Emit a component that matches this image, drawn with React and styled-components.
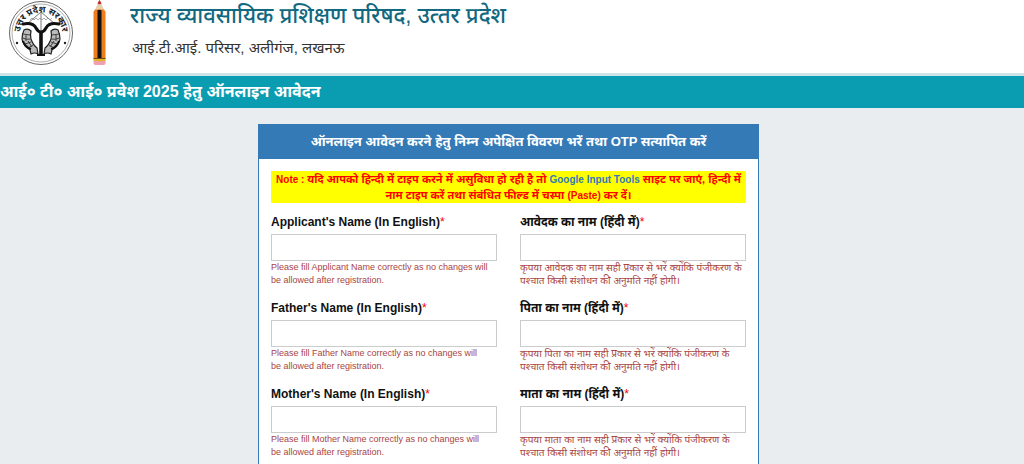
import React from 'react';
import styled, {createGlobalStyle} from 'styled-components';

const fields = [
    {
        id: 'applicant',
        en: "Applicant's Name (In English)",
        hi: 'आवेदक का नाम (हिंदी में)',
        enHelp: 'Please fill Applicant Name correctly as no changes will be\u00a0allowed after registration.',
        hiHelp: 'कृपया आवेदक का नाम सही प्रकार से भरें क्योंकि पंजीकरण के पश्चात किसी संशोधन की अनुमति नहीं होगी।',
    },
    {
        id: 'father',
        en: "Father's Name (In English)",
        hi: 'पिता का नाम (हिंदी में)',
        enHelp: 'Please fill Father Name correctly as no changes will be\u00a0allowed after registration.',
        hiHelp: 'कृपया पिता का नाम सही प्रकार से भरें क्योंकि पंजीकरण के पश्चात किसी संशोधन की अनुमति नहीं होगी।',
    },
    {
        id: 'mother',
        en: "Mother's Name (In English)",
        hi: 'माता का नाम (हिंदी में)',
        enHelp: 'Please fill Mother Name correctly as no changes will be\u00a0allowed after registration.',
        hiHelp: 'कृपया माता का नाम सही प्रकार से भरें क्योंकि पंजीकरण के पश्चात किसी संशोधन की अनुमति नहीं होगी।',
    },
];

const Emblem = () => (
    <EmblemSvg viewBox="0 0 66 66" role="img" aria-label="उत्तर प्रदेश सरकार">
        <defs>
            <path id="ring" d="M12.5 38 A21 21 0 1 1 53.5 38"/>
        </defs>
        <circle cx="33" cy="33" r="31.5" fill="#fff" stroke="#666" strokeWidth="1"/>
        <circle cx="33" cy="33" r="29" fill="none" stroke="#999" strokeWidth="0.8"/>
        <RingText>
            <textPath href="#ring" startOffset="50%" textAnchor="middle">उत्तर प्रदेश सरकार</textPath>
        </RingText>
        <path d="M33 12 L19 24 M33 12 L47 24 M33 12 V32" fill="none" stroke="#555" strokeWidth="0.8"/>
        <path d="M22 20 l2 -2 2 2 2 -2 2 2 2 -2 2 2 2 -2 2 2 2 -2 2 2 2 -2" fill="none" stroke="#888" strokeWidth="0.7"/>
        <path d="M15 24 q10 -2 13 4 q2 4 5 4 q3 0 5 -4 q3 -6 13 -4" fill="none" stroke="#111" strokeWidth="3" strokeLinecap="round"/>
        <path d="M33 31 V55" stroke="#111" strokeWidth="3.6"/>
        <path d="M29 55 h8" stroke="#111" strokeWidth="2"/>
        <g id="fish">
            <path d="M16 30 q4 -2 7 1 q-1 4 0 8 q2 6 6 9 l1 6 q-3 -2 -7 0 l-1 -4 q-7 -4 -8 -11 q0 -5 2 -9z" fill="#bbb" stroke="#222" strokeWidth="1.2"/>
            <path d="M15 34 l7 1 M14.5 38 q4 2 8 1 M17 44 l6 -2 M20 48 l5 -3 M18 35 v6 M20 41 l4 6" fill="none" stroke="#333" strokeWidth="0.9"/>
            <path d="M15 41 q2 6 8 8" fill="none" stroke="#111" strokeWidth="2"/>
        </g>
        <use href="#fish" transform="translate(66 0) scale(-1 1)"/>
        <circle cx="9" cy="43" r="1.2" fill="#222"/>
        <circle cx="57" cy="43" r="1.2" fill="#222"/>
    </EmblemSvg>
);

const Pencil = () => (
    <PencilSvg viewBox="0 0 13 65" aria-hidden="true">
        <path d="M6.5 0 L0.5 13 H12.5 Z" fill="#e3cfae"/>
        <path d="M6.5 0 L4.4 3.5 Q6.5 5 8.6 3.5 Z" fill="#c3292b"/>
        <path d="M0.5 12 Q2 8 4.5 10 Q6.5 8 8.5 10 Q11 8 12.5 12 V59 H0.5 Z" fill="#ef7d1c"/>
        <rect x="4.5" y="10" width="4" height="48" fill="#111"/>
        <rect x="0.5" y="58" width="12" height="1" fill="#6b4a12"/>
        <rect x="0.5" y="59" width="12" height="2" fill="#e6b422"/>
        <path d="M0.5 61 H12.5 V63 Q12.5 65 10.5 65 H2.5 Q0.5 65 0.5 63 Z" fill="#ef9fae"/>
    </PencilSvg>
);

const Field = ({id, label, help, small}) => (
    <FieldBlock>
        <Label htmlFor={id}>{label}<Star>*</Star></Label>
        <Input id={id} type="text" aria-describedby={`${id}-help`}/>
        <Help id={`${id}-help`} $small={small}>{help}</Help>
    </FieldBlock>
);

const App = () => {
    return (
        <>
            <GlobalStyle/>
            <Header>
                <Emblem/>
                <Pencil/>
                <HeaderText>
                    <Title>राज्य व्यावसायिक प्रशिक्षण परिषद, उत्‍तर प्रदेश</Title>
                    <Address>आई.टी.आई. परिसर, अलीगंज, लखनऊ</Address>
                </HeaderText>
            </Header>
            <Banner>आई० टी० आई० प्रवेश 2025 हेतु ऑनलाइन आवेदन</Banner>
            <Main>
                <Panel>
                    <PanelHeading>ऑनलाइन आवेदन करने हेतु निम्न अपेक्षित विवरण भरें तथा OTP सत्यापित करें</PanelHeading>
                    <PanelBody>
                        <Note>
                            <Latin>Note : </Latin>यदि आपको हिन्दी में टाइप करने में असुविधा हो रही है तो <NoteLink href="#">Google Input Tools</NoteLink> साइट पर जाएं, हिन्दी में नाम{'\u00a0'}टाइप करें तथा संबंधित फील्ड में चस्पा <Latin>(Paste)</Latin> कर दें।
                        </Note>
                        <Form>
                            {fields.map((field) => (
                                <React.Fragment key={field.id}>
                                    <Field id={`${field.id}-en`} label={field.en} help={field.enHelp} small/>
                                    <Field id={`${field.id}-hi`} label={field.hi} help={field.hiHelp}/>
                                </React.Fragment>
                            ))}
                        </Form>
                    </PanelBody>
                </Panel>
            </Main>
        </>
    );
}

export default App;

const GlobalStyle = createGlobalStyle`
    * {
        box-sizing: border-box;
    }
    body {
        margin: 0;
        background: #e9edf0;
        font-family: "Liberation Sans", "Noto Sans", sans-serif;
        overflow-x: hidden;
    }
`;

const Header = styled.header`
    display: flex;
    align-items: flex-start;
    height: 76px;
    padding-left: 8px;
    background: #fff;
    border-bottom: 3px solid #cfe3ea;
`;

const EmblemSvg = styled.svg`
    width: 66px;
    height: 66px;
    flex: none;
`;

const RingText = styled.text`
    font-family: "Noto Sans", sans-serif;
    font-size: 9px;
    font-weight: 700;
    fill: #222;
`;

const PencilSvg = styled.svg`
    width: 13px;
    height: 65px;
    margin-left: 19px;
    flex: none;
`;

const HeaderText = styled.div`
    padding-left: 24px;
`;

const Title = styled.h1`
    margin: 0;
    font-size: 22px;
    line-height: 32px;
    font-weight: 500;
    color: #11687f;
    white-space: nowrap;
`;

const Address = styled.p`
    margin: 0;
    padding-left: 2px;
    font-size: 15px;
    line-height: 32px;
    color: #333;
`;

const Banner = styled.h2`
    margin: 0;
    background: #0a9db2;
    color: #fff;
    font-size: 16px;
    line-height: 32px;
    font-weight: 700;
`;

const Main = styled.main`
    padding: 16px 7px 0 0;
`;

const Panel = styled.section`
    max-width: 501px;
    margin: 0 auto;
    background: #fff;
    border: 1px solid #337ab7;
`;

const PanelHeading = styled.h3`
    margin: 0;
    background: #337ab7;
    color: #fff;
    font-size: 13px;
    line-height: 34px;
    font-weight: 700;
    text-align: center;
`;

const PanelBody = styled.div`
    padding: 12px;
`;

const Note = styled.p`
    margin: 0;
    background: #ff0;
    color: #f00;
    font-size: 11px;
    line-height: 16px;
    font-weight: 700;
    text-align: center;
`;

const Latin = styled.span`
    font-size: 10px;
    line-height: 10px;
`;

const NoteLink = styled.a`
    color: #337ab7;
    font-size: 10px;
    line-height: 10px;
    text-decoration: none;
`;

const Form = styled.form`
    display: grid;
    grid-template-columns: 1fr 1fr;
    column-gap: 23px;
    row-gap: 12px;
    padding-top: 10px;
`;

const FieldBlock = styled.div`
    display: flex;
    flex-direction: column;
`;

const Label = styled.label`
    font-size: 12px;
    line-height: 18px;
    margin-bottom: 3px;
    font-weight: 700;
    color: #111;
    white-space: nowrap;
`;

const Star = styled.span`
    color: #f00;
    font-weight: 400;
`;

const Input = styled.input`
    width: 100%;
    height: 27px;
    padding: 4px 8px;
    border: 1px solid #ccc;
    background: #fff;
    font: inherit;
    font-size: 12px;
`;

const Help = styled.span`
    font-size: ${({$small}) => ($small ? '9px' : '10px')};
    line-height: 13px;
    color: #a94442;
`;
